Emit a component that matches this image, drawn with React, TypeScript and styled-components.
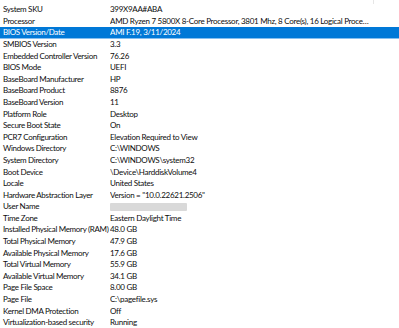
import React from "react";
import styled, { createGlobalStyle } from "styled-components";

const Global = createGlobalStyle`
  html, body { margin: 0; padding: 0; background: #ffffff; }
  body { font-family: Lato, "Noto Sans", sans-serif; }
`;

const Panel = styled.div`
  width: 399px;
  height: 328px;
  overflow: hidden;
  background: #ffffff;
  display: flex;
  flex-direction: column;
`;

const HeaderStrip = styled.div`
  width: 373px;
  height: 4.2px;
  flex: none;
  border-right: 1px solid #e6e6e6;
`;

const Row = styled.div<{ $selected?: boolean }>`
  display: grid;
  grid-template-columns: 110px 264px;
  height: 11.6px;
  flex: none;
  align-items: center;
  font-size: 8px;
  letter-spacing: -0.28px;
  line-height: 11.6px;
  color: ${(p) => (p.$selected ? "#ffffff" : "#0d0d0d")};
  background: ${(p) => (p.$selected ? "#0078d7" : "transparent")};
  box-shadow: ${(p) => (p.$selected ? "inset 0 -1px 0 #86bff0" : "none")};
`;

const Label = styled.span`
  padding-left: 3px;
  letter-spacing: -0.32px;
  white-space: nowrap;
  overflow: hidden;
`;

const Value = styled.span`
  white-space: nowrap;
  overflow: hidden;
  text-overflow: ellipsis;
  padding-right: 4px;
`;

const Redacted = styled.span`
  display: block;
  width: 77px;
  height: 8px;
  background: #d9d9d9;
  border-radius: 1px;
  filter: blur(0.6px);
`;

type Item = { label: string; value?: string; selected?: boolean; redacted?: boolean };

const items: Item[] = [
  { label: "System SKU", value: "399X9AA#ABA" },
  {
    label: "Processor",
    value:
      "AMD Ryzen 7 5800X 8-Core Processor, 3801 Mhz, 8 Core(s), 16 Logical Processor(s)",
  },
  { label: "BIOS Version/Date", value: "AMI F.19, 3/11/2024", selected: true },
  { label: "SMBIOS Version", value: "3.3" },
  { label: "Embedded Controller Version", value: "76.26" },
  { label: "BIOS Mode", value: "UEFI" },
  { label: "BaseBoard Manufacturer", value: "HP" },
  { label: "BaseBoard Product", value: "8876" },
  { label: "BaseBoard Version", value: "11" },
  { label: "Platform Role", value: "Desktop" },
  { label: "Secure Boot State", value: "On" },
  { label: "PCR7 Configuration", value: "Elevation Required to View" },
  { label: "Windows Directory", value: "C:\\WINDOWS" },
  { label: "System Directory", value: "C:\\WINDOWS\\system32" },
  { label: "Boot Device", value: "\\Device\\HarddiskVolume4" },
  { label: "Locale", value: "United States" },
  { label: "Hardware Abstraction Layer", value: 'Version = "10.0.22621.2506"' },
  { label: "User Name", redacted: true },
  { label: "Time Zone", value: "Eastern Daylight Time" },
  { label: "Installed Physical Memory (RAM)", value: "48.0 GB" },
  { label: "Total Physical Memory", value: "47.9 GB" },
  { label: "Available Physical Memory", value: "17.6 GB" },
  { label: "Total Virtual Memory", value: "55.9 GB" },
  { label: "Available Virtual Memory", value: "34.1 GB" },
  { label: "Page File Space", value: "8.00 GB" },
  { label: "Page File", value: "C:\\pagefile.sys" },
  { label: "Kernel DMA Protection", value: "Off" },
  { label: "Virtualization-based security", value: "Running" },
];

export default function App() {
  return (
    <>
      <Global />
      <Panel>
        <HeaderStrip />
        {items.map((it) => (
          <Row key={it.label} $selected={it.selected}>
            <Label>{it.label}</Label>
            <Value>{it.redacted ? <Redacted /> : it.value}</Value>
          </Row>
        ))}
      </Panel>
    </>
  );
}
